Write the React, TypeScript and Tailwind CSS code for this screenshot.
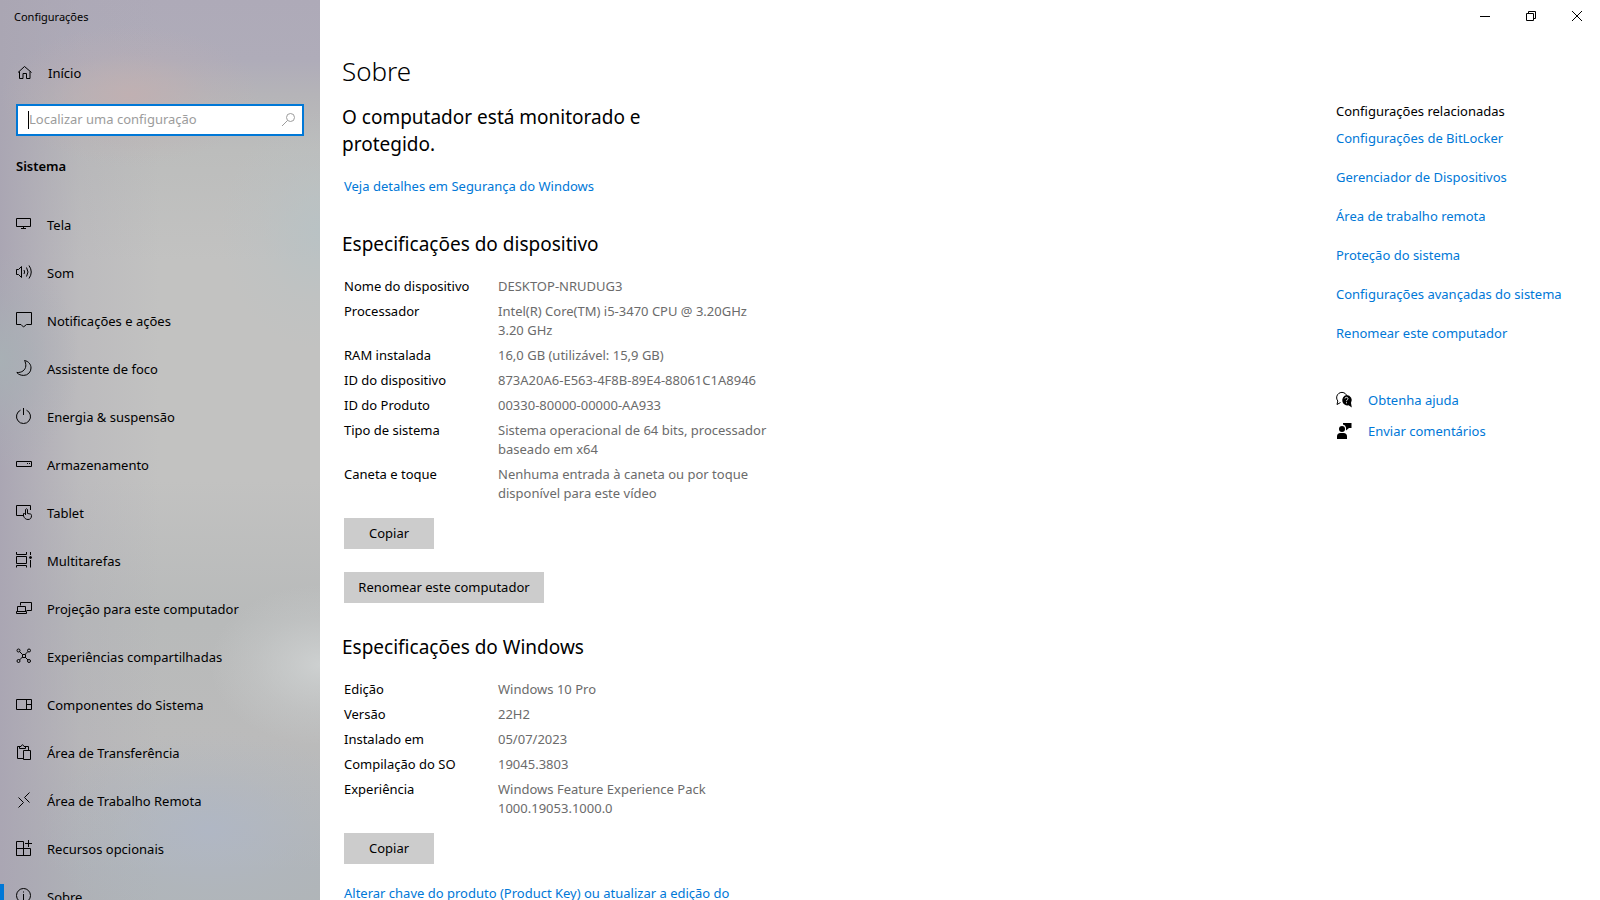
import type { ReactNode } from "react";

const navItems: { label: string; icon: ReactNode }[] = [
  {
    label: "Tela",
    icon: <path d="M.5 2.5h14v8H.5zM7.5 10.5v2M5 12.5h5" />,
  },
  {
    label: "Som",
    icon: <path d="M.5 5.5h2L5.5 2.5v11L2.5 10.5h-2zM8 6q1.2 2 0 4M10.500 3.500q3 4.500 0 9M13 1.500q4.500 6.500 0 13" />,
  },
  {
    label: "Notificações e ações",
    icon: <path d="M.5.5h15v12h-5L7.500 15 5 12.500H.5z" />,
  },
  {
    label: "Assistente de foco",
    icon: <path d="M8.500.5C12.500 1.300 15 4.200 15 8a7.300 7.300 0 0 1-7.300 7.400C5 15.400 2.500 14.600.8 12.500c5 .4 8.700-2.500 9-6.500C9.900 4 9.400 2 8.500.5z" />,
  },
  {
    label: "Energia & suspensão",
    icon: <path d="M7.500 0v7M4.500 2.200a7 7 0 1 0 6 0" />,
  },
  {
    label: "Armazenamento",
    icon: <path d="M.5 5.500h15v5H.5zM11 7.500h1M13 7.500h1" />,
  },
  {
    label: "Tablet",
    icon: <path d="M7 11.500H.5v-10h14V6M9.500 11V5.500q1-1.500 2 0v4l3 .5q1 .3 1 1.500c0 2.500-1 4-3.500 4S8.500 14 7.500 12V9.500q1-.5 2 1" />,
  },
  {
    label: "Multitarefas",
    icon: (
      <>
        <path d="M.5 0v2.500h10V0M.5 4.500h10v7H.5zM.5 15.500v-2h10v2M14.500 0v3M14.500 8v7.500" />
        <circle cx="14.500" cy="5.500" r="1" fill="currentColor" />
      </>
    ),
  },
  {
    label: "Projeção para este computador",
    icon: <path d="M4.500 5.500v-3h11v8h-5M1.500 11.500v-5h8v5M.5 11.500h10v2H.5z" />,
  },
  {
    label: "Experiências compartilhadas",
    icon: (
      <>
        <circle cx="2.500" cy="2.500" r="1.500" />
        <circle cx="13" cy="2.500" r="1.500" />
        <circle cx="2.500" cy="13" r="1.500" />
        <circle cx="13" cy="13" r="1.500" />
        <path d="M6.500 6.500h3v3h-3zM3.500 3.500l3 3M12 3.500l-3 3M3.500 12l3-3M12 12l-3-3" />
      </>
    ),
  },
  {
    label: "Componentes do Sistema",
    icon: <path d="M.5 3.500h15v10H.5zM10.500 3.500v10M10.500 8.500h5" />,
  },
  {
    label: "Área de Transferência",
    icon: <path d="M7 14.500H1.500v-12H4M9 2.500h3.500V6M3.500 4.500v-2H5q1.500-3.500 3 0h1.500v2zM7.500 6.500h7v9h-7z" />,
  },
  {
    label: "Área de Trabalho Remota",
    icon: <path d="M2.500 5.500l5 5-5 5M13.500.5l-5 5 5 5" />,
  },
  {
    label: "Recursos opcionais",
    icon: <path d="M.5 1.500h7v14h-7zM.5 8.500h14v7h-14M12.500 0v7M9 3.500h7" />,
  },
  {
    label: "Sobre",
    icon: (
      <>
        <circle cx="7.500" cy="7.500" r="7" />
        <path d="M7.500 6v6M7.500 3.500v1" />
      </>
    ),
  },
];

const deviceSpecs: [string, string][] = [
  ["Nome do dispositivo", "DESKTOP-NRUDUG3"],
  ["Processador", "Intel(R) Core(TM) i5-3470 CPU @ 3.20GHz 3.20 GHz"],
  ["RAM instalada", "16,0 GB (utilizável: 15,9 GB)"],
  ["ID do dispositivo", "873A20A6-E563-4F8B-89E4-88061C1A8946"],
  ["ID do Produto", "00330-80000-00000-AA933"],
  ["Tipo de sistema", "Sistema operacional de 64 bits, processador baseado em x64"],
  ["Caneta e toque", "Nenhuma entrada à caneta ou por toque disponível para este vídeo"],
];

const windowsSpecs: [string, string][] = [
  ["Edição", "Windows 10 Pro"],
  ["Versão", "22H2"],
  ["Instalado em", "05/07/2023"],
  ["Compilação do SO", "19045.3803"],
  ["Experiência", "Windows Feature Experience Pack 1000.19053.1000.0"],
];

const relatedLinks = [
  "Configurações de BitLocker",
  "Gerenciador de Dispositivos",
  "Área de trabalho remota",
  "Proteção do sistema",
  "Configurações avançadas do sistema",
  "Renomear este computador",
];

function Icon({ children }: { children: ReactNode }) {
  return (
    <svg
      viewBox="0 0 16 16"
      className="h-4 w-4 shrink-0 overflow-visible"
      fill="none"
      stroke="currentColor"
      aria-hidden="true"
    >
      {children}
    </svg>
  );
}

function SpecTable({ rows }: { rows: [string, string][] }) {
  return (
    <table className="w-full table-fixed text-left leading-[19px]">
      <tbody>
        {rows.map(([name, value]) => (
          <tr key={name} className="align-top">
            <th scope="row" className="w-[154px] pb-[6px] font-normal">{name}</th>
            <td className="pr-2 pb-[6px] text-[#6b6b6b]">{value}</td>
          </tr>
        ))}
      </tbody>
    </table>
  );
}

function Sidebar() {
  return (
    <aside className="w-80 shrink-0 overflow-hidden bg-[radial-gradient(ellipse_110px_80px_at_100%_665px,#cdd0d0,#cdd0d0b0_25%,#cdd0d050_60%,#cdd0d000),radial-gradient(ellipse_130px_70px_at_130px_95px,#c0b0b2,#c0b0b2b0_25%,#c0b0b240_60%,#c0b0b200),radial-gradient(ellipse_170px_100px_at_210px_830px,#b0b7c4,#b0b7c4b0_25%,#b0b7c440_60%,#b0b7c400),radial-gradient(ellipse_80px_110px_at_0_360px,#a8b0b5,#a8b0b5b0_25%,#a8b0b540_60%,#a8b0b500),radial-gradient(ellipse_100px_120px_at_100%_230px,#b9c2c4,#b9c2c4b0_25%,#b9c2c440_60%,#b9c2c400),linear-gradient(to_right,#aaa6b3,#aaa6b3b0_10%,#aaa6b340_25%,#aaa6b300_50%),linear-gradient(to_bottom,#aeaab8_0,#afacb9_60px,#b5b4b8_95px,#bcbdbc_150px,#c2c2c1_260px,#c2c2c1_480px,#b8baba_620px,#bbbbbb_740px,#b0b5b8_870px)]">
      <p className="flex h-[34px] items-center pl-[14px] text-[11px]">Configurações</p>
      <a href="#inicio" className="mt-[14px] flex h-12 items-center gap-4 pl-4">
        <Icon>
          <path d="M2 8.500L8.500 2.500 15.500 8.500M3.500 7.500v7h3.500v-5h3.500v5h3.500v-7" />
        </Icon>
        <span className="pt-[3px]">Início</span>
      </a>
      <label className="mx-4 mt-2 flex h-8 items-center border-2 border-[#0078d7] bg-white pr-[6px] pl-[10px]">
        <span className="sr-only">Localizar uma configuração</span>
        <span className="h-[18px] w-px shrink-0 bg-black" />
        <input
          type="text"
          placeholder="Localizar uma configuração"
          className="min-w-0 flex-1 outline-none placeholder:text-[#9c9c9c]"
        />
        <span className="text-[#9c9c9c]">
          <Icon>
            <circle cx="10.500" cy="5.500" r="4" />
            <path d="M7.500 8.500L2 14" />
          </Icon>
        </span>
      </label>
      <h2 className="mt-5 pl-4 font-semibold leading-5">Sistema</h2>
      <nav className="mt-6">
        {navItems.map(({ label, icon }) => (
          <a
            key={label}
            href="#"
            aria-current={label === "Sobre" ? "page" : undefined}
            className="group flex h-12 items-center"
          >
            <span className="mr-3 h-6 w-1 group-aria-[current=page]:bg-[#0078d7]" />
            <Icon>{icon}</Icon>
            <span className="ml-[15px] pt-[3px]">{label}</span>
          </a>
        ))}
      </nav>
    </aside>
  );
}

function WindowControls() {
  return (
    <div className="flex justify-end">
      <button aria-label="Minimizar" className="flex h-8 w-[46px] items-center justify-center">
        <Icon><path d="M3 8.500h10" /></Icon>
      </button>
      <button aria-label="Restaurar" className="flex h-8 w-[46px] items-center justify-center">
        <Icon><path d="M3.500 5.500h7v7h-7zM5.500 5.500v-2h7v7h-2" /></Icon>
      </button>
      <button aria-label="Fechar" className="flex h-8 w-[46px] items-center justify-center">
        <Icon><path d="M3 3l10 10M13 3L3 13" /></Icon>
      </button>
    </div>
  );
}

function RelatedSettings() {
  return (
    <aside className="w-[264px] shrink-0 pt-[49px] leading-5">
      <h2>Configurações relacionadas</h2>
      <ul className="mt-[7px] flex flex-col gap-[19px] text-[#0078d7]">
        {relatedLinks.map((link) => (
          <li key={link}>
            <a href="#">{link}</a>
          </li>
        ))}
      </ul>
      <div className="mt-[47px] flex flex-col gap-[11px]">
        <a href="#ajuda" className="flex items-center gap-4">
          <Icon>
            <path d="M4.500 10.500L1 12.500l.8-3.500A5.300 5.300 0 1 1 10.500 3" />
            <path d="M10.500 3a5.200 5.200 0 0 1 4.500 8l.8 4.500-3.300-2.200A5.200 5.200 0 1 1 10.500 3z" fill="currentColor" stroke="none" />
            <path d="M9 6.500q.2-1.200 1.500-1.200T12 6.700c0 1-1.500 1.200-1.500 2.500M10.500 10.300v1" stroke="#fff" />
          </Icon>
          <span className="text-[#0078d7]">Obtenha ajuda</span>
        </a>
        <a href="#comentarios" className="flex items-center gap-4">
          <Icon>
            <g fill="currentColor" stroke="none">
              <circle cx="6" cy="6" r="3" />
              <path d="M1 16v-2.500Q1 10 4.500 10h3q3.500 0 3.500 3.500V16zM7 0h8.500v5H13l-3 2.500V4.500Q9.500 2 7 1.500z" />
            </g>
          </Icon>
          <span className="text-[#0078d7]">Enviar comentários</span>
        </a>
      </div>
    </aside>
  );
}

export default function App() {
  return (
    <div className="flex h-screen overflow-hidden bg-white font-['Noto_Sans','Open_Sans',sans-serif] text-[13px] text-black">
      <Sidebar />
      <div className="flex min-w-0 flex-1 flex-col">
        <WindowControls />
        <div className="flex flex-1 justify-between pt-5">
          <main className="w-full max-w-[462px] pl-6">
            <h1 className="-ml-0.5 text-[26px] leading-[38px] font-light">Sobre</h1>
            <p className="-ml-0.5 mt-[14px] max-w-[320px] text-[19px] leading-[27px]">
              O computador está monitorado e protegido.
            </p>
            <a href="#seguranca" className="mt-[18px] block leading-5 text-[#0078d7]">
              Veja detalhes em Segurança do Windows
            </a>

            <section className="mt-[35px]">
              <h2 className="-ml-0.5 mb-[19px] text-[19px] leading-[27px]">Especificações do dispositivo</h2>
              <SpecTable rows={deviceSpecs} />
              <button className="mt-[9px] block h-[31px] w-[90px] bg-[#ccc]">Copiar</button>
              <button className="mt-[23px] block h-[31px] w-[200px] bg-[#ccc]">Renomear este computador</button>
            </section>

            <section className="mt-[31px]">
              <h2 className="-ml-0.5 mb-[19px] text-[19px] leading-[27px]">Especificações do Windows</h2>
              <SpecTable rows={windowsSpecs} />
              <button className="mt-[9px] block h-[31px] w-[90px] bg-[#ccc]">Copiar</button>
            </section>

            <a href="#chave" className="mt-[19px] block leading-5 text-[#0078d7]">
              Alterar chave do produto (Product Key) ou atualizar a edição do Windows
            </a>
          </main>
          <RelatedSettings />
        </div>
      </div>
    </div>
  );
}
